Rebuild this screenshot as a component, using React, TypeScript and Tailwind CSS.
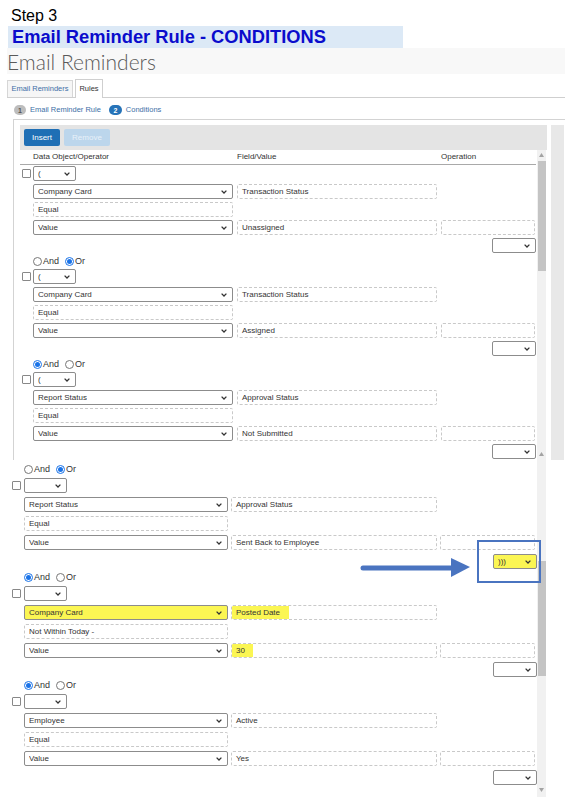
import React from "react";

type Variant = "top" | "bottom";

interface Cond {
  join?: "and" | "or";
  paren: string;
  obj: string;
  field: string;
  op: string;
  val: string;
  fieldValue: string;
  closing?: string;
  hiObj?: boolean;
  hiField?: boolean;
  hiValue?: boolean;
  hiClosing?: boolean;
}

const topConds: Cond[] = [
  { paren: "(", obj: "Company Card", field: "Transaction Status", op: "Equal", val: "Value", fieldValue: "Unassigned" },
  { join: "or", paren: "(", obj: "Company Card", field: "Transaction Status", op: "Equal", val: "Value", fieldValue: "Assigned" },
  { join: "and", paren: "(", obj: "Report Status", field: "Approval Status", op: "Equal", val: "Value", fieldValue: "Not Submitted" },
];

const bottomConds: Cond[] = [
  { join: "or", paren: "", obj: "Report Status", field: "Approval Status", op: "Equal", val: "Value", fieldValue: "Sent Back to Employee", closing: ")))", hiClosing: true },
  { join: "and", paren: "", obj: "Company Card", field: "Posted Date", op: "Not Within Today -", val: "Value", fieldValue: "30", hiObj: true, hiField: true, hiValue: true },
  { join: "and", paren: "", obj: "Employee", field: "Active", op: "Equal", val: "Value", fieldValue: "Yes" },
];

function Chevron() {
  return (
    <svg width="6" height="4" viewBox="0 0 6 4" className="shrink-0">
      <path d="M0.6 0.6 L3 3 L5.4 0.6" fill="none" stroke="#333" strokeWidth="1.3" />
    </svg>
  );
}

function Select({ text, className, yellow }: { text: string; className: string; yellow?: boolean }) {
  return (
    <div
      className={`flex h-[15px] items-center justify-between rounded-[2px] border border-[#8c8c8c] pl-[4px] pr-[5px] ${
        yellow ? "bg-[#fbf653]" : "bg-white"
      } ${className}`}
    >
      <span className="truncate">{text}</span>
      <Chevron />
    </div>
  );
}

function Input({ text, className, hiText }: { text: string; className: string; hiText?: string }) {
  return (
    <div className={`flex h-[15px] items-center overflow-hidden rounded-[2px] border border-dashed border-[#c9c9c9] ${className}`}>
      {hiText ? (
        <span className={`flex h-full items-center bg-[#fbf653] pl-[4px] ${hiText}`}>{text}</span>
      ) : (
        <span className="pl-[4px]">{text}</span>
      )}
    </div>
  );
}

function Radio({ checked, label }: { checked: boolean; label: string }) {
  return (
    <span className="flex items-center gap-[1px]">
      <span
        className={`flex h-[9px] w-[9px] items-center justify-center rounded-full border ${
          checked ? "border-[#1a73e8]" : "border-[#777]"
        }`}
      >
        {checked && <span className="h-[5px] w-[5px] rounded-full bg-[#1a73e8]" />}
      </span>
      <span className="text-[9px] text-[#333]">{label}</span>
    </span>
  );
}

function Condition({ c, variant }: { c: Cond; variant: Variant }) {
  const top = variant === "top";
  const wObj = top ? "w-[200px]" : "w-[204px]";
  const wField = top ? "w-[200px]" : "w-[206px]";
  const wOp = top ? "w-[94px]" : "w-[95px]";
  const colGap = top ? "gap-[4px]" : "gap-[3px]";
  const indent = top ? "pl-[13px]" : "pl-[12px]";
  return (
    <div className={`flex flex-col ${top ? "gap-[3px]" : "gap-[4px]"}`}>
      {c.join && (
        <div className={`flex items-center gap-[6px] ${indent} ${top ? "h-[10px]" : "h-[9px]"}`}>
          <Radio checked={c.join === "and"} label="And" />
          <Radio checked={c.join === "or"} label="Or" />
        </div>
      )}
      <div className={`flex items-center ${top ? "gap-[2px] pl-[2px]" : "gap-[3px]"}`}>
        <span className="h-[9px] w-[9px] rounded-[1px] border border-[#888] bg-white" />
        <Select text={c.paren} className="w-[43px]" />
      </div>
      <div className={`flex ${colGap} ${indent}`}>
        <Select text={c.obj} className={wObj} yellow={c.hiObj} />
        <Input text={c.field} className={wField} hiText={c.hiField ? "w-[57px]" : undefined} />
      </div>
      <div className={indent}>
        <Input text={c.op} className={wObj} />
      </div>
      <div className={`flex ${colGap} ${indent}`}>
        <Select text={c.val} className={wObj} />
        <Input text={c.fieldValue} className={wField} hiText={c.hiValue ? "w-[21px]" : undefined} />
        <Input text="" className={wOp} />
      </div>
      <div className="flex justify-end">
        <Select text={c.closing ?? ""} className="w-[44px]" yellow={c.hiClosing} />
      </div>
    </div>
  );
}

function UpArrow() {
  return (
    <svg width="5" height="4" viewBox="0 0 5 4">
      <polygon points="2.5,0 5,4 0,4" fill="#a3a3a3" />
    </svg>
  );
}

function DownArrow() {
  return (
    <svg width="5" height="4" viewBox="0 0 5 4">
      <polygon points="0,0 5,0 2.5,4" fill="#a3a3a3" />
    </svg>
  );
}

export default function App() {
  return (
    <div
      className="relative h-[805px] w-[565px] overflow-hidden bg-white text-[8px] leading-none text-[#333]"
      style={{ fontFamily: '"Liberation Sans", Arial, sans-serif' }}
    >
      {/* Caption */}
      <div className="pl-[11px] pt-[6px] text-[16px] leading-[20px] text-black">Step 3</div>
      <div className="ml-[8px] flex h-[22px] w-[395px] items-center bg-[#dce9f6] pl-[4px] text-[18.3px] font-bold text-[#0a0ccc]">
        Email Reminder Rule - CONDITIONS
      </div>

      {/* Page title */}
      <div
        className="ml-[7px] flex h-[26px] items-center bg-[#f8f8f8] text-[21px] font-light text-[#5a5a5a]"
        style={{ fontFamily: "Lato, sans-serif" }}
      >
        Email Reminders
      </div>

      {/* Tabs */}
      <div className="ml-[7px] mt-[6px] flex h-[18px] items-end gap-[2px] border-b border-[#cfcfcf]">
        <div className="flex h-[17px] w-[66px] items-center justify-center border border-b-0 border-[#d6d6d6] bg-[#f6f6f6] text-[7.5px] text-[#3d6fa6]">
          Email Reminders
        </div>
        <div className="-mb-px flex h-[19px] w-[28px] items-center justify-center border border-b-0 border-[#cfcfcf] bg-white text-[7.5px] text-[#333]">
          Rules
        </div>
      </div>

      {/* Steps */}
      <div className="ml-[14px] mt-[6px] flex h-[12px] items-center text-[7.5px] text-[#3d6fa6]">
        <span className="flex h-[10px] w-[12px] items-center justify-center rounded-full bg-[#bdbdbd] text-[7px] font-bold text-[#555]">
          1
        </span>
        <span className="ml-[4px]">Email Reminder Rule</span>
        <span className="ml-[8px] flex h-[10px] w-[13px] items-center justify-center rounded-full bg-[#2673b8] text-[7px] font-bold text-white">
          2
        </span>
        <span className="ml-[4px]">Conditions</span>
      </div>

      {/* Panel, scrolled to the top */}
      <div className="ml-[13px] mt-[3px] flex h-[341px] border-l border-t border-[#d3d3d3]">
        <div className="flex w-[536px] flex-col pl-[6px] pt-[5px]">
          <div className="flex h-[25px] w-[527px] shrink-0 items-center gap-[4px] bg-[#e4e4e4] pl-[4px]">
            <span className="flex h-[17px] w-[36px] items-center justify-center rounded-[2px] bg-[#1f6fb5] text-[8px] text-white">
              Insert
            </span>
            <span className="flex h-[17px] w-[46px] items-center justify-center rounded-[2px] bg-[#bcd6ec] text-[8px] text-[#e8f1f9]">
              Remove
            </span>
          </div>
          <div className="flex min-h-0 flex-1 gap-[1px]">
            <div className="flex w-[516px] flex-col">
              <div className="flex h-[15px] shrink-0 items-center border-b border-[#a9a9a9] pl-[13px]">
                <span className="w-[204px]">Data Object/Operator</span>
                <span className="w-[204px]">Field/Value</span>
                <span>Operation</span>
              </div>
              <div className="flex min-h-0 flex-1 flex-col gap-[3px] overflow-hidden pt-[1px]">
                {topConds.map((c, i) => (
                  <Condition key={i} c={c} variant="top" />
                ))}
              </div>
            </div>
            <div className="flex w-[9px] flex-col items-center bg-[#f1f1f1] pt-[3px]">
              <UpArrow />
              <div className="mt-[4px] h-[110px] w-[8px] bg-[#c4c4c4]" />
            </div>
          </div>
        </div>
        <div className="ml-px mt-[5px] w-[13px] bg-[#e8e8e8]" />
      </div>

      {/* Panel, scrolled further down */}
      <div className="flex h-[345px]">
        <div className="flex w-[537px] flex-col gap-[4px] pl-[12px] pt-[5px]">
          {bottomConds.map((c, i) => (
            <Condition key={i} c={c} variant="bottom" />
          ))}
        </div>
        <div className="relative -mt-[13px] flex h-[350px] w-[9px] flex-col items-center bg-[#f1f1f1] pt-[5px]">
          <UpArrow />
          <div className="mt-[105px] h-[115px] w-[8px] bg-[#c4c4c4]" />
          <div className="flex-1" />
          <div className="pb-[5px]">
            <DownArrow />
          </div>
        </div>
      </div>

      {/* Annotation: arrow and box */}
      <svg className="absolute left-[360px] top-[555px]" width="114" height="25" viewBox="0 0 114 25">
        <line x1="3" y1="13" x2="93" y2="13" stroke="#4a74c0" strokeWidth="5" strokeLinecap="round" />
        <polygon points="91,3 110,12 91,22" fill="#4a74c0" />
      </svg>
      <div className="absolute left-[477px] top-[540px] h-[43px] w-[64px] border-2 border-[#4a74c0]" />
    </div>
  );
}
